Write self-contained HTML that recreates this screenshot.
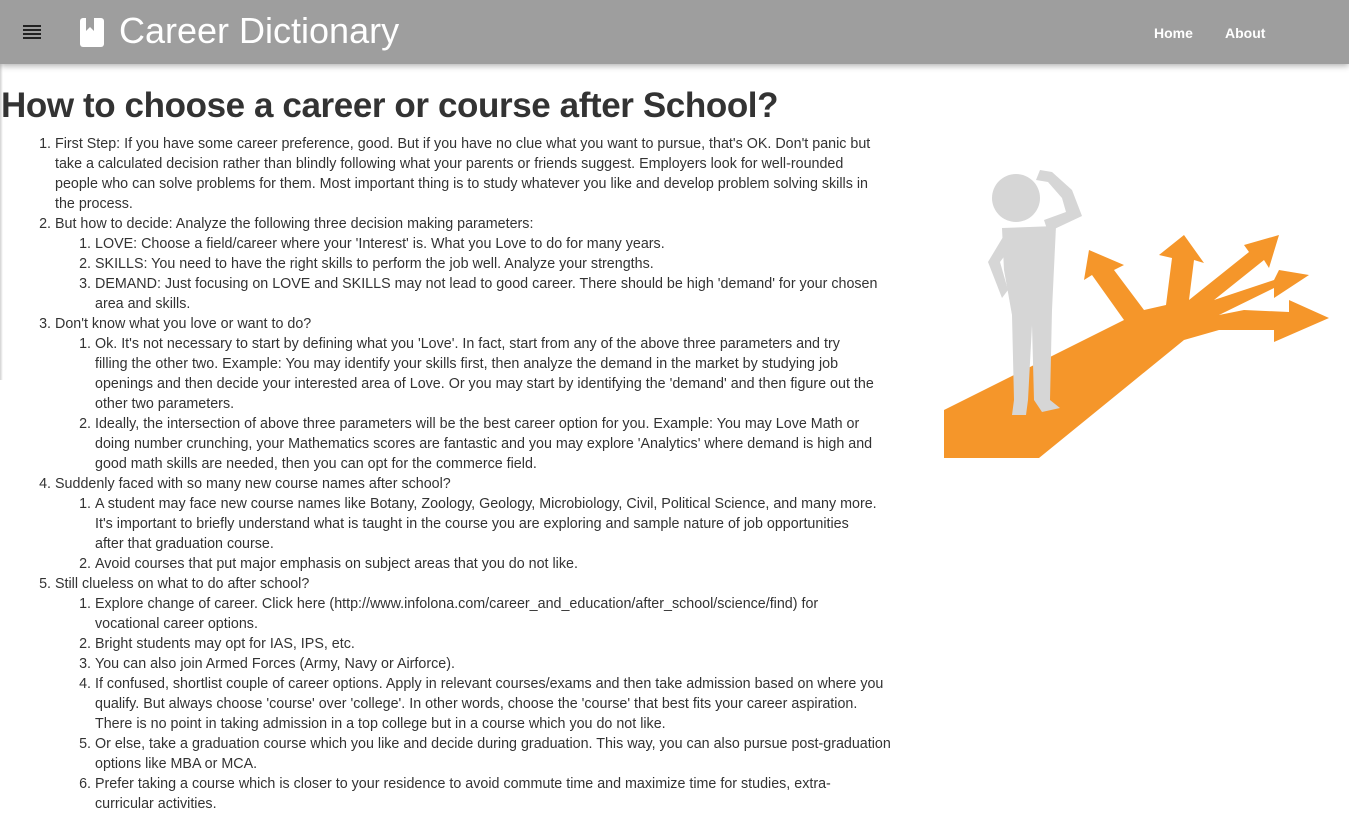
<!DOCTYPE html>
<html><head><meta charset="utf-8"><style>
body{margin:0;background:#fff;font-family:"Liberation Sans",sans-serif;color:#333;width:1349px;height:823px;overflow:hidden;position:relative}
.hdr{position:absolute;left:0;top:0;width:1349px;height:64px;background:#9e9e9e;box-shadow:0 2px 6px rgba(0,0,0,.3)}
.side{position:absolute;left:0;top:64px;width:3px;height:316px;background:linear-gradient(90deg,rgba(0,0,0,.18),rgba(0,0,0,0))}
.menu{position:absolute;left:23px;top:25px;width:18px}
.menu div{height:2px;background:#222;margin-bottom:2px}
.book{position:absolute;left:80px;top:18px;width:24px;height:29px;background:#fff;border-radius:3px}
.book:after{content:"";position:absolute;left:6px;top:0;border-left:4px solid #9e9e9e;border-right:4px solid #9e9e9e;border-bottom:4px solid transparent;height:9px;width:0}
.title{position:absolute;left:119px;top:10px;font-size:36px;color:#fff;white-space:nowrap}
.nav{position:absolute;top:25px;font-size:14px;font-weight:bold;color:#fff}
h1{position:absolute;left:1px;top:86px;margin:0;font-size:35px;font-weight:bold;color:#333;white-space:nowrap;letter-spacing:-0.4px}
.c{position:absolute;left:0;top:134px;font-size:14.3px;line-height:20px;white-space:nowrap}
ol{margin:0;padding-left:55px}
ol ol{padding-left:40px}
</style></head><body>
<div class="hdr"></div><div class="side"></div>
<div class="menu"><div></div><div></div><div></div><div></div></div>
<div class="book"></div>
<div class="title">Career Dictionary</div>
<div class="nav" style="left:1154px">Home</div>
<div class="nav" style="left:1225px">About</div>
<h1>How to choose a career or course after School?</h1>
<div class="c"><ol>
<li>First Step: If you have some career preference, good. But if you have no clue what you want to pursue, that's OK. Don't panic but<br>take a calculated decision rather than blindly following what your parents or friends suggest. Employers look for well-rounded<br>people who can solve problems for them. Most important thing is to study whatever you like and develop problem solving skills in<br>the process.</li>
<li>But how to decide: Analyze the following three decision making parameters:<ol>
<li>LOVE: Choose a field/career where your 'Interest' is. What you Love to do for many years.</li>
<li>SKILLS: You need to have the right skills to perform the job well. Analyze your strengths.</li>
<li>DEMAND: Just focusing on LOVE and SKILLS may not lead to good career. There should be high 'demand' for your chosen<br>area and skills.</li></ol></li>
<li>Don't know what you love or want to do?<ol>
<li>Ok. It's not necessary to start by defining what you 'Love'. In fact, start from any of the above three parameters and try<br>filling the other two. Example: You may identify your skills first, then analyze the demand in the market by studying job<br>openings and then decide your interested area of Love. Or you may start by identifying the 'demand' and then figure out the<br>other two parameters.</li>
<li>Ideally, the intersection of above three parameters will be the best career option for you. Example: You may Love Math or<br>doing number crunching, your Mathematics scores are fantastic and you may explore 'Analytics' where demand is high and<br>good math skills are needed, then you can opt for the commerce field.</li></ol></li>
<li>Suddenly faced with so many new course names after school?<ol>
<li>A student may face new course names like Botany, Zoology, Geology, Microbiology, Civil, Political Science, and many more.<br>It's important to briefly understand what is taught in the course you are exploring and sample nature of job opportunities<br>after that graduation course.</li>
<li>Avoid courses that put major emphasis on subject areas that you do not like.</li></ol></li>
<li>Still clueless on what to do after school?<ol>
<li>Explore change of career. Click here (http://www.infolona.com/career_and_education/after_school/science/find) for<br>vocational career options.</li>
<li>Bright students may opt for IAS, IPS, etc.</li>
<li>You can also join Armed Forces (Army, Navy or Airforce).</li>
<li>If confused, shortlist couple of career options. Apply in relevant courses/exams and then take admission based on where you<br>qualify. But always choose 'course' over 'college'. In other words, choose the 'course' that best fits your career aspiration.<br>There is no point in taking admission in a top college but in a course which you do not like.</li>
<li>Or else, take a graduation course which you like and decide during graduation. This way, you can also pursue post-graduation<br>options like MBA or MCA.</li>
<li>Prefer taking a course which is closer to your residence to avoid commute time and maximize time for studies, extra-<br>curricular activities.</li></ol></li>
</ol></div>
<svg style="position:absolute;left:944px;top:150px" width="390" height="310" viewBox="0 0 390 310">
<g fill="#f5962a">
<path d="M0 260 L0 308 L95 308 L240 190 L275 180 L330 180 L330 192 L385 168 L345 150 L345 162 L300 160 L275 165 L330 138 L330 148 L365 125 L335 120 L330 130 L270 150 L320 110 L325 118 L335 85 L300 95 L305 102 L245 150 L250 110 L260 113 L240 85 L215 105 L228 108 L222 155 L200 160 L170 120 L180 115 L145 100 L140 130 L148 125 L180 170 Z"/>
</g>
<g fill="#d6d6d6">
<circle cx="72" cy="48" r="24"/>
<path d="M58 78 L112 76 L108 160 L106 250 L116 258 L98 262 L90 250 L88 175 L84 250 L82 265 L68 265 L70 250 L68 165 L60 120 Z"/>
<path d="M104 82 L138 66 L128 40 L108 22 L96 20 L92 30 L104 32 L118 48 L122 62 L100 70 Z"/>
<path d="M62 82 L44 112 L58 148 L64 140 L56 112 L68 96 Z"/>
</g>
</svg>
</body></html>
